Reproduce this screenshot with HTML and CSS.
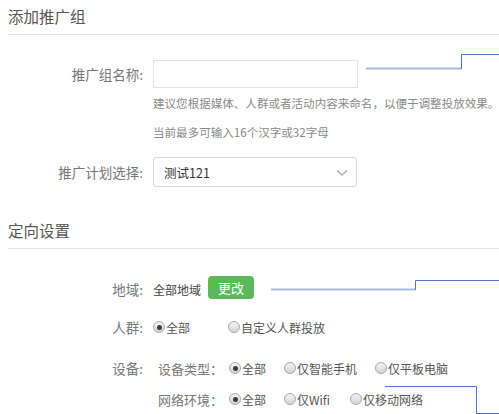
FILE: index.html
```html
<!DOCTYPE html>
<html lang="zh-CN">
<head>
<meta charset="utf-8">
<title>添加推广组</title>
<link rel="stylesheet" href="styles.css">
</head>
<body>
<div class="page">
  <h2 class="sec-title">添加推广组</h2>
  <div class="row row-name">
    <label class="label">推广组名称:</label>
    <input class="text-input" type="text">
  </div>
  <p class="hint hint-1">建议您根据媒体、人群或者活动内容来命名，以便于调整投放效果。</p>
  <p class="hint hint-2">当前最多可输入16个汉字或32字母</p>
  <div class="row row-plan">
    <label class="label">推广计划选择:</label>
    <div class="select">
      <span class="select-text">测试121</span>
      <svg class="chev" width="12" height="8" viewBox="0 0 12 8"><path d="M1 1.5 L6 6 L11 1.5" fill="none" stroke="#b0b0b0" stroke-width="1.6"/></svg>
    </div>
  </div>

  <h2 class="sec-title sec-2">定向设置</h2>
  <div class="row row-region">
    <span class="label">地域:</span>
    <span class="value">全部地域</span>
    <button class="btn-green">更改</button>
  </div>
  <div class="row row-crowd">
    <span class="label">人群:</span>
    <span class="opt opt-w75"><i class="radio on"></i>全部</span>
    <span class="opt"><i class="radio"></i>自定义人群投放</span>
  </div>
  <div class="row row-device">
    <span class="label">设备:</span>
    <span class="sublabel">设备类型：</span>
    <span class="opt opt-w55"><i class="radio on"></i>全部</span>
    <span class="opt opt-w91"><i class="radio"></i>仅智能手机</span>
    <span class="opt"><i class="radio"></i>仅平板电脑</span>
  </div>
  <div class="row row-net">
    <span class="label"></span>
    <span class="sublabel">网络环境：</span>
    <span class="opt opt-w55"><i class="radio on"></i>全部</span>
    <span class="opt opt-w66"><i class="radio"></i>仅Wifi</span>
    <span class="opt"><i class="radio"></i>仅移动网络</span>
  </div>
</div>
<svg class="connectors" width="499" height="414" viewBox="0 0 499 414">
  <rect x="366" y="67.5" width="95.5" height="2" fill="#a6bedc"/>
  <path d="M461.5 69 V54.5 H499" fill="none" stroke="#4a7cbf" stroke-width="1"/>
  <rect x="271" y="288.5" width="144.5" height="2" fill="#a6bedc"/>
  <path d="M415.5 290 V280.5 H499" fill="none" stroke="#4a7cbf" stroke-width="1"/>
  <path d="M385 386.5 H476.5 V413.5 H499" fill="none" stroke="#4a7cbf" stroke-width="1"/>
</svg>
</body>
</html>
```
FILE: styles.css
```css
html, body {
  margin: 0;
  padding: 0;
  background: #fff;
}
body {
  font-family: "Noto Sans CJK SC", "Microsoft YaHei", "Noto Sans", sans-serif;
  color: #666;
  position: relative;
  width: 499px;
  height: 414px;
  overflow: hidden;
}
.page {
  padding: 0 0 0 8px;
}
.sec-title {
  margin: 0;
  height: 34px;
  line-height: 32px;
  font-size: 15.5px;
  font-weight: normal;
  color: #555;
  border-bottom: 1px solid #e3e3e3;
}
.sec-2 {
  margin-top: 27px;
}
.row {
  display: flex;
  align-items: center;
  font-size: 12px;
}
.label {
  width: 135px;
  margin-right: 10px;
  text-align: right;
  font-size: 13.5px;
  color: #777;
  flex: none;
}
.row-name {
  margin-top: 25px;
  height: 28px;
}
.text-input {
  box-sizing: border-box;
  width: 205px;
  height: 28px;
  margin: 0;
  border: 1px solid #e2e2e2;
  padding: 0 8px;
  outline: none;
}
.hint {
  margin: 0 0 0 145px;
  line-height: 20px;
  font-size: 11.55px;
  color: #8a8a8a;
  white-space: nowrap;
}
.hint-1 { margin-top: 5px; }
.hint-2 { margin-top: 9px; }
.row-plan {
  margin-top: 15px;
  height: 30px;
}
.select {
  box-sizing: border-box;
  width: 204px;
  height: 30px;
  border: 1px solid #d8d8d8;
  border-radius: 3px;
  display: flex;
  align-items: center;
  justify-content: space-between;
  padding: 0 8px 0 10px;
}
.select-text {
  font-size: 12.5px;
  color: #333;
}
.chev { display: block; margin-top: 1px; }

.row-region { margin-top: 28px; height: 24px; }
.row-crowd { margin-top: 14px; height: 24px; }
.row-device { margin-top: 17px; height: 24px; }
.row-net { margin-top: 7px; height: 24px; }

.value {
  font-size: 12px;
  color: #444;
  margin-right: 7px;
}
.btn-green {
  width: 46px;
  height: 23px;
  border: none;
  border-radius: 4px;
  background: #5cb85c;
  color: #fff;
  font-family: inherit;
  font-size: 13px;
  padding: 0;
  margin-top: -3px;
}
.sublabel {
  font-size: 13px;
  color: #777;
  margin-left: 5px;
  width: 71px;
  flex: none;
}
.opt {
  display: inline-flex;
  align-items: center;
  font-size: 12px;
  color: #555;
  white-space: nowrap;
}
.opt-w75 { width: 75px; }
.opt-w55 { width: 55px; }
.opt-w91 { width: 91px; }
.opt-w66 { width: 66px; }
.radio {
  box-sizing: border-box;
  width: 12px;
  height: 12px;
  border-radius: 50%;
  border: 1px solid #a8a8a8;
  background: linear-gradient(#f4f4f4, #d4d4d4);
  margin-right: 1px;
  position: relative;
  flex: none;
}
.radio.on::after {
  content: "";
  position: absolute;
  left: 2.5px;
  top: 2.5px;
  width: 5px;
  height: 5px;
  border-radius: 50%;
  background: #3a3a3a;
}
.connectors {
  position: absolute;
  left: 0;
  top: 0;
  pointer-events: none;
}
```
